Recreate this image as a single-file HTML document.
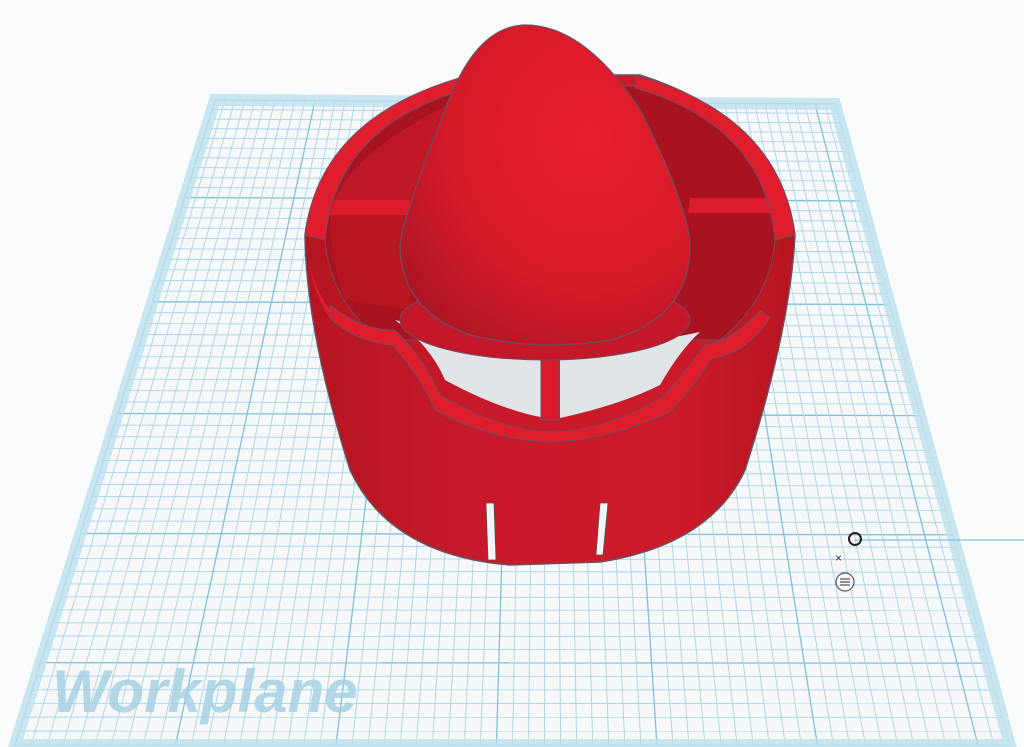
<!DOCTYPE html>
<html><head><meta charset="utf-8"><style>
html,body{margin:0;padding:0;background:#fafbfb;}
svg{display:block}
</style></head><body>
<svg id="s" width="1024" height="747" viewBox="0 0 1024 747" xmlns="http://www.w3.org/2000/svg">
<defs>
<radialGradient id="egg" cx="0.65" cy="0.35" r="0.8">
<stop offset="0" stop-color="#e61d2e"/><stop offset="0.6" stop-color="#d61a2a"/><stop offset="1" stop-color="#a81421"/>
</radialGradient>
<linearGradient id="body" x1="0" x2="1">
<stop offset="0" stop-color="#b4141f"/><stop offset="0.35" stop-color="#c8192a"/><stop offset="0.75" stop-color="#cc1a2a"/><stop offset="1" stop-color="#b6141f"/>
</linearGradient>
<radialGradient id="sh" cx="0.5" cy="0.5" r="0.5">
<stop offset="0" stop-color="#c9ccd0"/><stop offset="1" stop-color="#e8eaec"/>
</radialGradient>
</defs>
<polygon points="215,100 835,104 1010,745 15,745" fill="#f6f8f9"/>
<g id="grid" stroke="#a9d5e6" stroke-width="0.9" fill="none"></g>
<polygon points="215,100 835,104 1010,745 15,745" fill="none" stroke="#bde0ee" stroke-width="12" stroke-linejoin="miter" opacity="0.8"/>
<line x1="855" y1="540" x2="1024" y2="540" stroke="#7fc3dc" stroke-width="1.2"/>
<text x="52" y="712" font-family="Liberation Sans, sans-serif" font-weight="bold" font-style="italic" font-size="60" fill="#a8d2e3" opacity="0.85">Workplane</text>
<ellipse cx="545" cy="365" rx="120" ry="50" fill="url(#sh)" opacity="0.85"/>
<path d="M305,235 Q306,330 350,470 Q390,555 510,565 L600,562 Q710,545 745,470 Q790,330 795,235 Q780,120 640,75 L470,75 Q320,120 305,235 Z" fill="url(#body)" stroke="#6a5060" stroke-width="1.5"/>
<path d="M325,240 Q335,125 470,86 L635,86 Q765,125 775,240 Q770,300 720,340 L380,340 Q330,300 325,240 Z" fill="#a8131f" stroke="#6a5060" stroke-width="1"/>
<path d="M330,200 L410,200 L410,215 L325,215 Z" fill="#dc1c2c"/>
<path d="M690,198 L775,198 L775,213 L688,213 Z" fill="#dc1c2c"/>
<path d="M330,215 Q345,150 470,95 L470,200 L330,200 Z" fill="#c01726"/>
<path d="M330,215 L410,215 L410,310 L345,300 Q330,260 330,215Z" fill="#b7151f"/>
<path d="M395,320 Q430,345 445,380 Q500,410 545,418 L545,360 L395,320 Z" fill="#e2e5e8"/>
<path d="M560,360 L560,418 Q620,405 660,385 Q680,350 700,332 Z" fill="#e2e5e8"/>
<path d="M330,305 Q360,330 395,330 Q425,360 440,395 Q500,430 550,432 Q610,430 665,395 Q690,365 705,345 Q735,340 760,310 L770,318 Q745,355 712,358 Q695,385 670,412 Q610,440 550,442 Q490,440 435,410 Q420,375 392,345 Q355,342 330,318 Z" fill="#e01d2d" stroke="#6a5060" stroke-width="1"/>
<rect x="541" y="358" width="18" height="62" fill="#d81b2b" stroke="#6a5060" stroke-width="1"/>
<path d="M305,235 Q320,115 470,75 L470,88 Q335,125 325,240 Z" fill="#e01d2d" stroke="#6a5060" stroke-width="1"/>
<path d="M795,235 Q780,115 635,75 L635,88 Q765,125 775,240 Z" fill="#e01d2d" stroke="#6a5060" stroke-width="1"/>
<path d="M305,235 Q308,280 330,310 L330,318 Q310,290 305,235Z" fill="#e01d2d"/>
<ellipse cx="545" cy="320" rx="145" ry="40" fill="#c4172a" stroke="#6a5060" stroke-width="1"/>
<path d="M525,25 Q475,26 445,110 Q405,210 400,245 Q400,310 470,335 Q540,352 610,340 Q690,318 690,245 Q688,205 640,110 Q585,25 525,25 Z" fill="url(#egg)" stroke="#6a5060" stroke-width="1.2"/>
<path d="M486,503 L494,503 L496,560 L488,560 Z" fill="#f2f4f6" stroke="#555" stroke-width="0.8"/>
<path d="M600,503 L608,503 L603,555 L596,555 Z" fill="#f2f4f6" stroke="#555" stroke-width="0.8"/>
<circle cx="855" cy="539" r="6" fill="none" stroke="#222" stroke-width="2"/>
<text x="835" y="562" font-family="Liberation Sans, sans-serif" font-size="12" fill="#333">×</text>
<circle cx="845" cy="582" r="9" fill="#f7f7f7" stroke="#555" stroke-width="1.2"/>
<path d="M840,579 H850 M840,582 H850 M840,585 H850" stroke="#555" stroke-width="1.2"/>
</svg>
<script>
(function(){
var g=document.getElementById('grid'),ns='http://www.w3.org/2000/svg';
var TL=[215,100],TR=[835,104],BR=[1010,745],BL=[15,745];
function L(a,b,m){var l=document.createElementNS(ns,'line');l.setAttribute('x1',a[0]);l.setAttribute('y1',a[1]);l.setAttribute('x2',b[0]);l.setAttribute('y2',b[1]);if(m){l.setAttribute('stroke','#7fc0da');l.setAttribute('stroke-width','1.3');}g.appendChild(l);}
function lerp(a,b,t){return [a[0]+(b[0]-a[0])*t,a[1]+(b[1]-a[1])*t];}
var N=56,r=1.22;
for(var i=0;i<=N;i++){var t=i/N;var f=t/(r-t*(r-1));L(lerp(TL,BL,f),lerp(TR,BR,f),i%10==0);}
var M=62;
for(var j=0;j<=M;j++){var u=j/M;L(lerp(TL,TR,u),lerp(BL,BR,u),j%10==0);}
})();
</script>
</body></html>
